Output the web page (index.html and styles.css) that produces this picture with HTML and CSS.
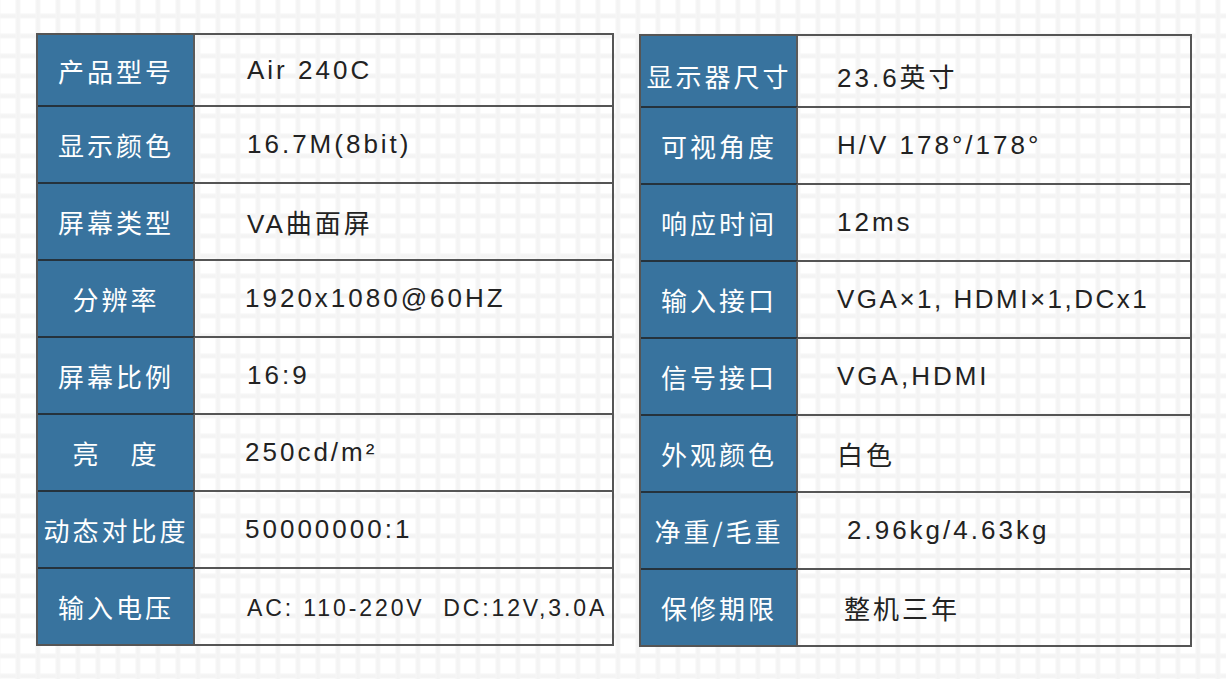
FILE: index.html
```html
<!DOCTYPE html>
<html lang="zh-CN">
<head>
<meta charset="utf-8">
<title>规格参数</title>
<link rel="stylesheet" href="styles.css">
</head>
<body>
<div class="page">
  <div class="spec spec-left">
    <div class="row"><div class="label">产品型号</div><div class="value">Air 240C</div></div>
    <div class="row"><div class="label">显示颜色</div><div class="value">16.7M(8bit)</div></div>
    <div class="row"><div class="label">屏幕类型</div><div class="value">VA曲面屏</div></div>
    <div class="row"><div class="label">分辨率</div><div class="value nudge-l">1920x1080@60HZ</div></div>
    <div class="row"><div class="label">屏幕比例</div><div class="value">16:9</div></div>
    <div class="row"><div class="label">亮　度</div><div class="value nudge-l">250cd/m²</div></div>
    <div class="row"><div class="label">动态对比度</div><div class="value nudge-l">50000000:1</div></div>
    <div class="row"><div class="label">输入电压</div><div class="value small">AC: 110-220V&nbsp;&nbsp;DC:12V,3.0A</div></div>
  </div>
  <div class="spec spec-right">
    <div class="row"><div class="label">显示器尺寸</div><div class="value">23.6英寸</div></div>
    <div class="row"><div class="label">可视角度</div><div class="value">H/V 178°/178°</div></div>
    <div class="row"><div class="label">响应时间</div><div class="value">12ms</div></div>
    <div class="row"><div class="label">输入接口</div><div class="value tight">VGA×1, HDMI×1,DCx1</div></div>
    <div class="row"><div class="label">信号接口</div><div class="value">VGA,HDMI</div></div>
    <div class="row"><div class="label">外观颜色</div><div class="value">白色</div></div>
    <div class="row"><div class="label">净重/毛重</div><div class="value nudge-r2">2.96kg/4.63kg</div></div>
    <div class="row"><div class="label">保修期限</div><div class="value nudge-r1">整机三年</div></div>
  </div>
</div>
</body>
</html>
```

FILE: styles.css
```css
html, body {
  margin: 0;
  padding: 0;
}

body {
  width: 1226px;
  height: 679px;
  overflow: hidden;
  background-color: #ffffff;
  background-image:
    linear-gradient(to right, transparent 0 14px, #f6f6f6 15px, #f3f3f3 17px, #f6f6f6 19px, transparent 20px),
    linear-gradient(to bottom, transparent 0 13px, #f6f6f6 14px, #f3f3f3 16px, #f6f6f6 18px, transparent 19px);
  background-size: 20px 20px, 20px 20px;
  background-position: 1px 0, 0 0;
  font-family: "Liberation Sans", "Noto Sans CJK SC", sans-serif;
}

.page {
  display: flex;
  align-items: flex-start;
  gap: 25px;
  padding: 33px 0 0 36px;
}

.spec {
  box-sizing: border-box;
  border: 2px solid #555;
  display: flex;
  flex-direction: column;
}

.spec-left {
  width: 578px;
}

.spec-right {
  width: 553px;
  margin-top: 1px;
}

.row {
  display: grid;
  grid-template-columns: 157px 1fr;
  height: 77px;
}

.row:first-child {
  height: 70px;
}

.label {
  box-sizing: border-box;
  background: #38739e;
  color: #ffffff;
  border-right: 2px solid #5a5a5a;
  border-top: 2px solid #25323c;
  display: flex;
  align-items: center;
  justify-content: center;
  font-family: "Noto Sans CJK SC", sans-serif;
  font-size: 26px;
  letter-spacing: 3px;
  padding-left: 1px;
}

.value {
  box-sizing: border-box;
  border-top: 2px solid #555;
  display: flex;
  align-items: center;
  color: #222;
  font-size: 26px;
  letter-spacing: 3px;
}

.row:first-child .label,
.row:first-child .value {
  border-top: none;
}

.spec-left .value {
  padding-left: 52px;
}

.spec-right .value {
  padding-left: 39px;
}

.spec-right .row:first-child .value,
.spec-right .row:first-child .label {
  padding-top: 8px;
}

.spec-left .value.nudge-l {
  padding-left: 50px;
}

.spec-left .value.small {
  font-size: 23px;
  letter-spacing: 2.9px;
  padding-left: 52px;
  padding-top: 4px;
}

.spec-right .value.tight {
  letter-spacing: 2.5px;
}

.spec-right .value.nudge-r1 {
  padding-left: 46px;
}

.spec-right .value.nudge-r2 {
  padding-left: 49px;
}
```
